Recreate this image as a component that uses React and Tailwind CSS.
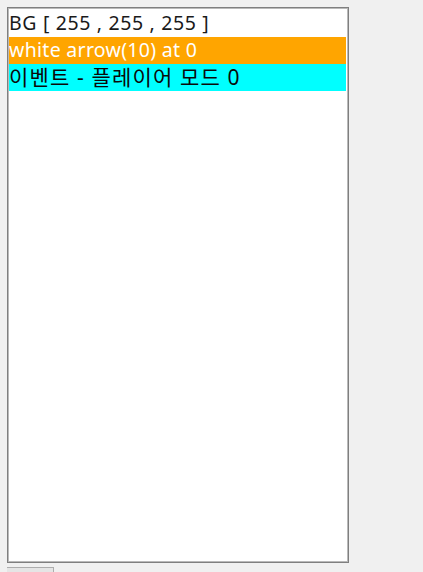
import React from 'react';

const rows = [
  { text: 'BG [ 255 , 255 , 255 ]', cls: 'bg-white text-[#1a1a1a] text-[19.5px] tracking-[0.65px]' },
  { text: 'white arrow(10) at 0', cls: 'bg-[#ffa500] text-white text-[19.5px] tracking-[0.3px]' },
  { text: '이벤트 - 플레이어 모드 0', cls: 'bg-[#00ffff] text-[#0a0a0a] text-[21px] tracking-[1.15px]' },
];

const App = () => {
  return (
    <div className="w-[423px] h-[572px] overflow-hidden bg-[#f0f0f0] pt-[7px] pl-[7px] font-['Noto_Sans','Noto_Sans_CJK_KR',sans-serif]">
      <div className="w-[342px] h-[556px] border border-[#7f7f7f] bg-white">
        <div className="h-full border border-[#b9b9b9] pt-[1px]">
          <ul className="w-[337px]">
            {rows.map((r) => (
              <li key={r.text} className={`h-[27px] leading-[26px] whitespace-nowrap ${r.cls}`}>
                {r.text}
              </li>
            ))}
          </ul>
        </div>
      </div>
      <div className="mt-[4px] w-[47px] h-[10px] border-t border-r border-[#adadad] bg-[#e5e5e5]" />
    </div>
  );
};

export default App;
